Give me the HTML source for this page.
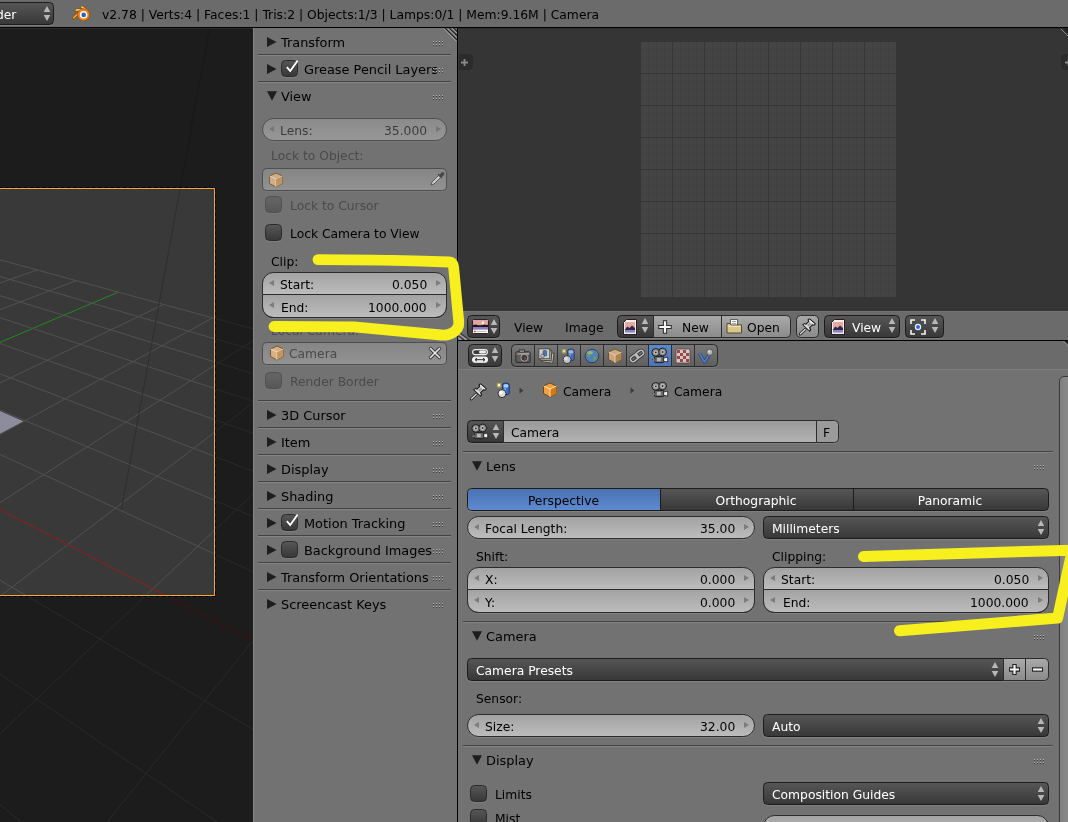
<!DOCTYPE html>
<html lang="en"><head><meta charset="utf-8"><title>Blender - Camera clipping</title>
<style>
html,body{margin:0;padding:0}
body{width:1068px;height:822px;overflow:hidden;position:relative;background:#727272;
 font-family:"DejaVu Sans","Liberation Sans",sans-serif;font-size:12.2px;color:#000;line-height:16px}
div,span,svg{position:absolute;box-sizing:border-box;white-space:nowrap}
svg{overflow:visible}
.t,.ph{will-change:transform}
/* areas */
#topbar{left:0;top:0;width:1068px;height:27px;background:#6b6b6b}
#topline{left:0;top:27px;width:1068px;height:1px;background:#000}
#topline2{left:0;top:28px;width:253px;height:1px;background:#2b2b2b}
#topline3{left:253px;top:28px;width:204px;height:1px;background:#727272;border-left:1px solid #878787}
#topline4{left:458px;top:28px;width:610px;height:1px;background:#2d2d2d}
#view3d{left:0;top:29px;width:253px;height:793px;background:#393939;overflow:hidden}
#npanel{left:253px;top:29px;width:204px;height:793px;background:#727272;border-left:1px solid #878787}
#vsplit{left:457px;top:28px;width:1px;height:794px;background:#000}
#vsplit2{left:458px;top:28px;width:1px;height:283px;background:#3c3c3c}
#imged{left:459px;top:29px;width:609px;height:282px;background:#353535;overflow:hidden}
#imghdr{left:458px;top:311px;width:610px;height:29px;background:#6b6b6b;border-top:1px solid #717171}
#hsplit{left:458px;top:340px;width:610px;height:1px;background:#000}
#prophdr{left:458px;top:341px;width:610px;height:28px;background:#6b6b6b}
#props{left:458px;top:369px;width:610px;height:452px;background:#727272;border-top:1px solid #7d7d7d}
/* text */
.t{font-size:12.3px;line-height:16px;color:#000;transform:translate(-1px,1px)}
.tw{color:#fff}
.td{color:#4a4a4a}
.ph{font-size:12.9px;line-height:16px;color:#000;transform:translate(0,1.5px)}
/* separators */
.sep{height:1px;background:#424242;box-shadow:0 1px 0 rgba(255,255,255,.13)}
/* widgets */
.w{height:23px;border:1px solid #2c2c2c;box-shadow:0 1px 0 rgba(255,255,255,.10)}
.num{background:linear-gradient(#a3a3a3,#bcbcbc);border-radius:11.5px}
.numT{border-radius:11.5px 11.5px 0 0}
.numB{border-radius:0 0 11.5px 11.5px;border-top:none;height:23px}
.menu{background:linear-gradient(#565656,#383838);border-color:#1c1c1c;border-radius:4.5px;color:#fff}
.tool{background:linear-gradient(#a9a9a9,#8b8b8b);border-radius:4.5px}
.txt{background:linear-gradient(#999,#b3b3b3);border-radius:4.5px}
.dis{opacity:.5}
.cb{width:17px;height:17px;border:1px solid #2a2a2a;border-radius:4.5px;background:linear-gradient(#565656,#383838);box-shadow:0 1px 0 rgba(255,255,255,.10)}
.cbd{opacity:.45}
.al,.ar{width:0;height:0;border-top:3.8px solid transparent;border-bottom:3.8px solid transparent;top:6.7px}
.al{border-right:5.5px solid #7c7c7c;left:5.5px}
.ar{border-left:5.5px solid #7c7c7c;right:5.5px}
.lab{left:18px;top:3px}
.val{right:18px;top:3px}
.numB .lab,.numB .val{top:3.5px}
.grip{width:13px;height:5px}

</style></head>
<body>
<!-- ================= TOP INFO BAR ================= -->
<div id="topbar">
  <div class="w menu" style="left:-12px;top:2px;width:66px;height:23px"></div>
  <span class="t tw" style="left:-3.4px;top:6px">der</span>
  <svg style="left:43px;top:6px" width="8" height="15" viewBox="0 0 8 15"><path d="M4 0 L7.3 6 H.7Z M4 15 L7.3 9 H.7Z" fill="#b8b8b8"/></svg>
  <svg id="blogo" style="left:72px;top:5px" width="19" height="17" viewBox="0 0 19 17">
    <g fill="none" stroke-linecap="round"><path d="M15 5.4 L9.8 2.1 M10.6 5 L4.2 5.2 M8 6.6 L1.8 12.6" stroke="#7a4308" stroke-width="3"/><path d="M15 5.4 L9.8 2.1 M10.6 5 L4.2 5.2 M8 6.6 L1.8 12.6" stroke="#f59a32" stroke-width="2"/><path d="M9.8 1.9 L13 3.9 M4.4 4.8 L9.6 4.6" stroke="#ffd6a6" stroke-width=".8"/></g>
    <circle cx="11.6" cy="9.8" r="6.1" fill="#ee820f" stroke="#8a4a08" stroke-width=".6"/>
    <circle cx="11.6" cy="9.8" r="3.8" fill="#fff"/>
    <circle cx="11.7" cy="9.9" r="2.3" fill="#2d62b8"/>
  </svg>
  <span class="t" id="status" style="left:102.7px;top:5.8px;font-size:12.33px">v2.78 | Verts:4 | Faces:1 | Tris:2 | Objects:1/3 | Lamps:0/1 | Mem:9.16M | Camera</span>
</div>
<div id="topline"></div><div id="topline2"></div><div id="topline3"></div><div id="topline4"></div>

<!-- ================= 3D VIEWPORT ================= -->
<div id="view3d">
  <svg style="left:0;top:-29px" width="253" height="822" viewBox="0 0 253 822" shape-rendering="auto" stroke-width="1">
    <g>
<line x1="-1002.9" y1="405.1" x2="-148.5" y2="219.3" stroke="#515151"/>
<line x1="-1002.2" y1="430.9" x2="-122.2" y2="226.5" stroke="#515151"/>
<line x1="-1001.4" y1="460.0" x2="-94.3" y2="234.1" stroke="#515151"/>
<line x1="-1000.5" y1="493.1" x2="-64.6" y2="242.2" stroke="#515151"/>
<line x1="-999.4" y1="531.1" x2="-32.9" y2="250.8" stroke="#515151"/>
<line x1="-998.2" y1="575.3" x2="1.0" y2="260.1" stroke="#515151"/>
<line x1="-996.7" y1="627.3" x2="37.3" y2="270.0" stroke="#515151"/>
<line x1="-995.0" y1="689.2" x2="76.3" y2="280.6" stroke="#515151"/>
<line x1="-992.9" y1="764.3" x2="118.2" y2="292.1" stroke="#1f8a1f"/>
<line x1="-990.3" y1="857.3" x2="163.6" y2="304.5" stroke="#515151"/>
<line x1="-987.0" y1="975.4" x2="212.7" y2="317.9" stroke="#515151"/>
<line x1="-982.7" y1="1130.4" x2="266.1" y2="332.5" stroke="#515151"/>
<line x1="-976.8" y1="1342.8" x2="324.4" y2="348.4" stroke="#515151"/>
<line x1="-968.2" y1="1651.5" x2="388.2" y2="365.8" stroke="#515151"/>
<line x1="-954.6" y1="2141.7" x2="458.5" y2="385.0" stroke="#515151"/>
<line x1="-929.6" y1="3039.7" x2="536.1" y2="406.2" stroke="#515151"/>
<line x1="-869.0" y1="5216.5" x2="622.3" y2="429.7" stroke="#515151"/>
<line x1="-1002.9" y1="405.1" x2="-869.0" y2="5216.5" stroke="#515151"/>
<line x1="-904.5" y1="383.7" x2="-182.2" y2="3012.1" stroke="#515151"/>
<line x1="-816.6" y1="364.6" x2="95.2" y2="2121.6" stroke="#515151"/>
<line x1="-737.5" y1="347.4" x2="245.2" y2="1640.0" stroke="#515151"/>
<line x1="-666.1" y1="331.9" x2="339.2" y2="1338.3" stroke="#515151"/>
<line x1="-601.2" y1="317.8" x2="403.7" y2="1131.5" stroke="#515151"/>
<line x1="-542.0" y1="304.9" x2="450.6" y2="981.0" stroke="#515151"/>
<line x1="-487.7" y1="293.1" x2="486.2" y2="866.5" stroke="#515151"/>
<line x1="-437.9" y1="282.2" x2="514.3" y2="776.4" stroke="#921c1c"/>
<line x1="-391.9" y1="272.2" x2="536.9" y2="703.8" stroke="#515151"/>
<line x1="-349.3" y1="263.0" x2="555.6" y2="643.9" stroke="#515151"/>
<line x1="-309.8" y1="254.4" x2="571.2" y2="593.8" stroke="#515151"/>
<line x1="-273.1" y1="246.4" x2="584.5" y2="551.1" stroke="#515151"/>
<line x1="-238.8" y1="238.9" x2="595.9" y2="514.4" stroke="#515151"/>
<line x1="-206.7" y1="232.0" x2="605.9" y2="482.5" stroke="#515151"/>
<line x1="-176.7" y1="225.4" x2="614.6" y2="454.5" stroke="#515151"/>
<line x1="-148.5" y1="219.3" x2="622.3" y2="429.7" stroke="#515151"/>
    </g>
    <!-- lamp line -->
    <line x1="209.5" y1="28" x2="121.3" y2="510" stroke="#2f2f2f"/>
    <!-- plane -->
    <path d="M0 411 L23.5 421.3 L0 433.8 Z" fill="#8c8c9d"/>
    <!-- passepartout -->
    <path d="M0 29 H253 V822 H0 V596 H215 V188 H0 Z" fill="#000" opacity=".5"/>
    <!-- camera border -->
    <path d="M0 187.5 H215.5 V596.5 H0" fill="none" stroke="#000" stroke-dasharray="3.2 3" stroke-dashoffset="1"/>
    <path d="M0 188.5 H214.5 V595.5 H0" fill="none" stroke="#f3a640"/>
  </svg>
</div>

<!-- ================= N PANEL ================= -->
<div id="npanel">
  <!-- corner grip -->
  <svg style="left:190px;top:-1px" width="13" height="14" viewBox="0 0 13 14"><path d="M1 0 L13 12 M5.3 0 L13 7.7 M9.6 0 L13 3.4" stroke="#161616" stroke-width="1.05"/><path d="M-.2 0.6 L12.8 13.6 M4.1 .6 L12.8 9.3 M8.4 .6 L12.8 5" stroke="#b4b4b4" stroke-width=".8"/></svg>

  <!-- headers -->
  <svg class="tri" style="left:13px;top:8px" width="10" height="10"><path d="M0 0 L9.6 5 L0 10Z" fill="#1e1e1e"/></svg>
  <span class="ph" style="left:27px;top:4px">Transform</span>
  <div class="sep" style="left:4px;top:25px;width:193px"></div>

  <svg class="tri" style="left:13px;top:35px" width="10" height="10"><path d="M0 0 L9.6 5 L0 10Z" fill="#1e1e1e"/></svg>
  <div class="cb" style="left:27px;top:31px"></div>
  <svg style="left:28.5px;top:30px" width="17" height="16" viewBox="0 0 17 16"><path d="M3.8 8.2 L7.2 12 L14.6 1.6" fill="none" stroke="#1a1a1a" stroke-width="3" opacity=".35"/><path d="M3.8 8.2 L7.2 12 L14.6 1.6" fill="none" stroke="#fff" stroke-width="1.9"/></svg>
  <span class="ph" style="left:50px;top:31px">Grease Pencil Layers</span>
  <div class="sep" style="left:4px;top:52px;width:193px"></div>

  <svg class="tri" style="left:13px;top:62px" width="10" height="10"><path d="M0 .3 L10 .3 L5 9.8Z" fill="#1e1e1e"/></svg>
  <span class="ph" style="left:27px;top:58px">View</span>

  <!-- Lens (disabled) -->
  <div class="w num dis" style="left:8px;top:89px;width:185px"><div class="al"></div><div class="ar"></div><span class="t lab">Lens:</span><span class="t val">35.000</span></div>
  <span class="t td" style="left:18px;top:118px">Lock to Object:</span>
  <div class="w txt dis" style="left:8px;top:139px;width:185px"></div>
  <svg class="icube" style="left:14px;top:142.5px" width="16" height="16" viewBox="0 0 16 16" opacity=".75"><path d="M8 1 L14.5 4 V11.5 L8 15 L1.5 11.5 V4Z" fill="#e9b77e" stroke="#5a3a12" stroke-width=".8"/><path d="M1.5 4 L8 7 L14.5 4 M8 7 V15" fill="none" stroke="#fff1dc" stroke-width=".9"/><path d="M8 7 L14.5 4 V11.5 L8 15Z" fill="#c98f4e" opacity=".8"/></svg>
  <svg style="left:175px;top:142px" width="16" height="16" viewBox="0 0 16 16" opacity=".75"><path d="M2 14 L3 11 L9.5 4.5 L11.5 6.5 L5 13 Z" fill="#ddd" stroke="#333" stroke-width=".8"/><path d="M9 3 L13 7 M10.5 5 L13 2 C14 1 15.5 2.5 14.5 3.5 L12 6" fill="#333" stroke="#333" stroke-width="1.2"/></svg>

  <div class="cb cbd" style="left:11px;top:167px"></div>
  <span class="t td" style="left:37px;top:168px">Lock to Cursor</span>
  <div class="cb" style="left:11px;top:195px"></div>
  <span class="t" style="left:37px;top:196px">Lock Camera to View</span>

  <span class="t" style="left:18px;top:224px">Clip:</span>
  <div class="w num numT" style="left:8px;top:243px;width:185px"><div class="al"></div><div class="ar"></div><span class="t lab">Start:</span><span class="t val">0.050</span></div>
  <div class="w num numB" style="left:8px;top:266px;width:185px"><div class="al"></div><div class="ar"></div><span class="t lab" style="left:19px;top:3.5px">End:</span><span class="t val">1000.000</span></div>

  <span class="t td" style="left:18px;top:293px">Local Camera:</span>
  <div class="w txt dis" style="left:8px;top:313px;width:185px"></div>
  <svg class="icube" style="left:14.5px;top:316px" width="16" height="16" viewBox="0 0 16 16" opacity=".85"><path d="M8 1 L14.5 4 V11.5 L8 15 L1.5 11.5 V4Z" fill="#e9b77e" stroke="#5a3a12" stroke-width=".8"/><path d="M1.5 4 L8 7 L14.5 4 M8 7 V15" fill="none" stroke="#fff1dc" stroke-width=".9"/><path d="M8 7 L14.5 4 V11.5 L8 15Z" fill="#c98f4e" opacity=".8"/></svg>
  <span class="t td" style="left:36px;top:316px">Camera</span>
  <svg style="left:174.5px;top:318px" width="12" height="12" viewBox="0 0 12 12"><path d="M1.5 1.5 L10.5 10.5 M10.5 1.5 L1.5 10.5" stroke="#333" stroke-width="3.2" stroke-linecap="round"/><path d="M1.5 1.5 L10.5 10.5 M10.5 1.5 L1.5 10.5" stroke="#e6e6e6" stroke-width="1.7" stroke-linecap="round"/></svg>
  <div class="cb cbd" style="left:11px;top:343px"></div>
  <span class="t td" style="left:37px;top:344px">Render Border</span>
  <div class="sep" style="left:4px;top:371px;width:193px"></div>
  <svg class="tri" style="left:13px;top:380.5px" width="10" height="10"><path d="M0 0 L9.6 5 L0 10Z" fill="#1e1e1e"/></svg>
  <span class="ph" style="left:27px;top:376.5px">3D Cursor</span>
  <div class="sep" style="left:4px;top:398px;width:193px"></div>
  <svg class="tri" style="left:13px;top:407.5px" width="10" height="10"><path d="M0 0 L9.6 5 L0 10Z" fill="#1e1e1e"/></svg>
  <span class="ph" style="left:27px;top:403.5px">Item</span>
  <div class="sep" style="left:4px;top:425px;width:193px"></div>
  <svg class="tri" style="left:13px;top:434.5px" width="10" height="10"><path d="M0 0 L9.6 5 L0 10Z" fill="#1e1e1e"/></svg>
  <span class="ph" style="left:27px;top:430.5px">Display</span>
  <div class="sep" style="left:4px;top:452px;width:193px"></div>
  <svg class="tri" style="left:13px;top:461.5px" width="10" height="10"><path d="M0 0 L9.6 5 L0 10Z" fill="#1e1e1e"/></svg>
  <span class="ph" style="left:27px;top:457.5px">Shading</span>
  <div class="sep" style="left:4px;top:479px;width:193px"></div>
  <svg class="tri" style="left:13px;top:488.5px" width="10" height="10"><path d="M0 0 L9.6 5 L0 10Z" fill="#1e1e1e"/></svg>
  <div class="cb" style="left:27px;top:484.5px"></div>
  <svg style="left:28.5px;top:483.5px" width="17" height="16" viewBox="0 0 17 16"><path d="M3.8 8.2 L7.2 12 L14.6 1.6" fill="none" stroke="#1a1a1a" stroke-width="3" opacity=".35"/><path d="M3.8 8.2 L7.2 12 L14.6 1.6" fill="none" stroke="#fff" stroke-width="1.9"/></svg>
  <span class="ph" style="left:50px;top:484.5px">Motion Tracking</span>
  <div class="sep" style="left:4px;top:506px;width:193px"></div>
  <svg class="tri" style="left:13px;top:515.5px" width="10" height="10"><path d="M0 0 L9.6 5 L0 10Z" fill="#1e1e1e"/></svg>
  <div class="cb" style="left:27px;top:511.5px"></div>
  <span class="ph" style="left:50px;top:511.5px">Background Images</span>
  <div class="sep" style="left:4px;top:533px;width:193px"></div>
  <svg class="tri" style="left:13px;top:542.5px" width="10" height="10"><path d="M0 0 L9.6 5 L0 10Z" fill="#1e1e1e"/></svg>
  <span class="ph" style="left:27px;top:538.5px">Transform Orientations</span>
  <div class="sep" style="left:4px;top:560px;width:193px"></div>
  <svg class="tri" style="left:13px;top:569.5px" width="10" height="10"><path d="M0 0 L9.6 5 L0 10Z" fill="#1e1e1e"/></svg>
  <span class="ph" style="left:27px;top:565.5px">Screencast Keys</span>
  <svg class="grip" style="left:179px;top:12px" width="13" height="5" viewBox="0 0 13 5"><path d="M0 .5h1M3 .5h1M6 .5h1M9 .5h1M0 3.5h1M3 3.5h1M6 3.5h1M9 3.5h1" stroke="#b4b4b4" stroke-width="1"/><path d="M0 1.5h1M3 1.5h1M6 1.5h1M9 1.5h1M0 4.5h1M3 4.5h1M6 4.5h1M9 4.5h1" stroke="#3c3c3c" stroke-width="1"/></svg>
  <svg class="grip" style="left:179px;top:39px" width="13" height="5" viewBox="0 0 13 5"><path d="M0 .5h1M3 .5h1M6 .5h1M9 .5h1M0 3.5h1M3 3.5h1M6 3.5h1M9 3.5h1" stroke="#b4b4b4" stroke-width="1"/><path d="M0 1.5h1M3 1.5h1M6 1.5h1M9 1.5h1M0 4.5h1M3 4.5h1M6 4.5h1M9 4.5h1" stroke="#3c3c3c" stroke-width="1"/></svg>
  <svg class="grip" style="left:179px;top:66px" width="13" height="5" viewBox="0 0 13 5"><path d="M0 .5h1M3 .5h1M6 .5h1M9 .5h1M0 3.5h1M3 3.5h1M6 3.5h1M9 3.5h1" stroke="#b4b4b4" stroke-width="1"/><path d="M0 1.5h1M3 1.5h1M6 1.5h1M9 1.5h1M0 4.5h1M3 4.5h1M6 4.5h1M9 4.5h1" stroke="#3c3c3c" stroke-width="1"/></svg>
  <svg class="grip" style="left:179px;top:384.5px" width="13" height="5" viewBox="0 0 13 5"><path d="M0 .5h1M3 .5h1M6 .5h1M9 .5h1M0 3.5h1M3 3.5h1M6 3.5h1M9 3.5h1" stroke="#b4b4b4" stroke-width="1"/><path d="M0 1.5h1M3 1.5h1M6 1.5h1M9 1.5h1M0 4.5h1M3 4.5h1M6 4.5h1M9 4.5h1" stroke="#3c3c3c" stroke-width="1"/></svg>
  <svg class="grip" style="left:179px;top:411.5px" width="13" height="5" viewBox="0 0 13 5"><path d="M0 .5h1M3 .5h1M6 .5h1M9 .5h1M0 3.5h1M3 3.5h1M6 3.5h1M9 3.5h1" stroke="#b4b4b4" stroke-width="1"/><path d="M0 1.5h1M3 1.5h1M6 1.5h1M9 1.5h1M0 4.5h1M3 4.5h1M6 4.5h1M9 4.5h1" stroke="#3c3c3c" stroke-width="1"/></svg>
  <svg class="grip" style="left:179px;top:438.5px" width="13" height="5" viewBox="0 0 13 5"><path d="M0 .5h1M3 .5h1M6 .5h1M9 .5h1M0 3.5h1M3 3.5h1M6 3.5h1M9 3.5h1" stroke="#b4b4b4" stroke-width="1"/><path d="M0 1.5h1M3 1.5h1M6 1.5h1M9 1.5h1M0 4.5h1M3 4.5h1M6 4.5h1M9 4.5h1" stroke="#3c3c3c" stroke-width="1"/></svg>
  <svg class="grip" style="left:179px;top:465.5px" width="13" height="5" viewBox="0 0 13 5"><path d="M0 .5h1M3 .5h1M6 .5h1M9 .5h1M0 3.5h1M3 3.5h1M6 3.5h1M9 3.5h1" stroke="#b4b4b4" stroke-width="1"/><path d="M0 1.5h1M3 1.5h1M6 1.5h1M9 1.5h1M0 4.5h1M3 4.5h1M6 4.5h1M9 4.5h1" stroke="#3c3c3c" stroke-width="1"/></svg>
  <svg class="grip" style="left:179px;top:492.5px" width="13" height="5" viewBox="0 0 13 5"><path d="M0 .5h1M3 .5h1M6 .5h1M9 .5h1M0 3.5h1M3 3.5h1M6 3.5h1M9 3.5h1" stroke="#b4b4b4" stroke-width="1"/><path d="M0 1.5h1M3 1.5h1M6 1.5h1M9 1.5h1M0 4.5h1M3 4.5h1M6 4.5h1M9 4.5h1" stroke="#3c3c3c" stroke-width="1"/></svg>
  <svg class="grip" style="left:179px;top:519.5px" width="13" height="5" viewBox="0 0 13 5"><path d="M0 .5h1M3 .5h1M6 .5h1M9 .5h1M0 3.5h1M3 3.5h1M6 3.5h1M9 3.5h1" stroke="#b4b4b4" stroke-width="1"/><path d="M0 1.5h1M3 1.5h1M6 1.5h1M9 1.5h1M0 4.5h1M3 4.5h1M6 4.5h1M9 4.5h1" stroke="#3c3c3c" stroke-width="1"/></svg>
  <svg class="grip" style="left:179px;top:546.5px" width="13" height="5" viewBox="0 0 13 5"><path d="M0 .5h1M3 .5h1M6 .5h1M9 .5h1M0 3.5h1M3 3.5h1M6 3.5h1M9 3.5h1" stroke="#b4b4b4" stroke-width="1"/><path d="M0 1.5h1M3 1.5h1M6 1.5h1M9 1.5h1M0 4.5h1M3 4.5h1M6 4.5h1M9 4.5h1" stroke="#3c3c3c" stroke-width="1"/></svg>
  <svg class="grip" style="left:179px;top:573.5px" width="13" height="5" viewBox="0 0 13 5"><path d="M0 .5h1M3 .5h1M6 .5h1M9 .5h1M0 3.5h1M3 3.5h1M6 3.5h1M9 3.5h1" stroke="#b4b4b4" stroke-width="1"/><path d="M0 1.5h1M3 1.5h1M6 1.5h1M9 1.5h1M0 4.5h1M3 4.5h1M6 4.5h1M9 4.5h1" stroke="#3c3c3c" stroke-width="1"/></svg>
</div>
<div id="vsplit"></div><div id="vsplit2"></div>

<!-- ================= IMAGE EDITOR ================= -->
<div id="imged">
  <!-- uv grid: abs x 641..897, y 42..298 -->
  <svg style="left:182px;top:13px" width="257" height="257" viewBox="0 0 257 257" shape-rendering="crispEdges">
    <rect x="0" y="0" width="255" height="255" fill="#444444"/>
    <path d="M7.5 0V255M15.5 0V255M23.5 0V255M39.5 0V255M47.5 0V255M55.5 0V255M71.5 0V255M79.5 0V255M87.5 0V255M103.5 0V255M111.5 0V255M119.5 0V255M135.5 0V255M143.5 0V255M151.5 0V255M167.5 0V255M175.5 0V255M183.5 0V255M199.5 0V255M207.5 0V255M215.5 0V255M231.5 0V255M239.5 0V255M247.5 0V255M0 7.5H255M0 15.5H255M0 23.5H255M0 39.5H255M0 47.5H255M0 55.5H255M0 71.5H255M0 79.5H255M0 87.5H255M0 103.5H255M0 111.5H255M0 119.5H255M0 135.5H255M0 143.5H255M0 151.5H255M0 167.5H255M0 175.5H255M0 183.5H255M0 199.5H255M0 207.5H255M0 215.5H255M0 231.5H255M0 239.5H255M0 247.5H255" stroke="#404040" stroke-width="1" fill="none"/>
    <path d="M31.5 0V255M63.5 0V255M95.5 0V255M127.5 0V255M159.5 0V255M191.5 0V255M223.5 0V255M0 31.5H255M0 63.5H255M0 95.5H255M0 127.5H255M0 159.5H255M0 191.5H255M0 223.5H255" stroke="#363636" stroke-width="1" fill="none"/>
  </svg>
  <!-- region open tabs -->
  <div style="left:-4px;top:25px;width:17.5px;height:16px;border-radius:4.5px;background:#2b2b2b"></div>
  <svg style="left:2px;top:29.5px" width="7" height="7" viewBox="0 0 7 7"><path d="M3.5 0V7M0 3.5H7" stroke="#8a8a8a" stroke-width="1.8"/></svg>
  <div style="left:602px;top:25px;width:14px;height:16px;border-radius:4.5px;background:#2b2b2b"></div>
  <svg style="left:606px;top:29.5px" width="7" height="7" viewBox="0 0 7 7"><path d="M3.5 0V7M0 3.5H7" stroke="#8a8a8a" stroke-width="1.8"/></svg>
  <!-- corner grip (top right) -->
  <svg style="left:601px;top:0" width="8" height="8" viewBox="0 0 8 8"><path d="M1 0 L8 7" stroke="#888" stroke-width="1"/><path d="M3 0 L8 5 L8 0Z" fill="#222"/></svg>
</div>

<!-- ================= IMAGE EDITOR HEADER ================= -->
<div id="imghdr">
  <svg style="left:0px;top:18px" width="13" height="10" viewBox="0 0 13 10"><path d="M0 1.5 L11.5 10 M0 5.5 L6 10" stroke="#3a3a3a" stroke-width="1.3"/><path d="M0 3.5 L8.8 10 M0 7.5 L3.4 10" stroke="#a4a4a4" stroke-width="1.3"/></svg>
  <!-- editor type -->
  <div class="w menu" style="left:9px;top:3px;width:33px"></div>
  <svg style="left:14px;top:7px" width="17" height="15" viewBox="0 0 17 15"><rect x=".5" y=".5" width="16" height="14" rx="1" fill="#fbfbfb" stroke="#2e2222"/><rect x="1" y="1" width="15" height="5.6" fill="#e3a3a0"/><circle cx="11" cy="3.7" r="1.2" fill="#fff"/><path d="M1 6.4 L2 5.6 L3.4 6 L4 5 L4.6 6 L8 6.2 L11 6 L12.4 5.4 L14 6 L16 5.8 V8.2 H1Z" fill="#1c1418"/><rect x="1" y="8" width="15" height="2.6" fill="#8c7fb9"/><circle cx="2.9" cy="12.3" r=".9" fill="#e01818"/><rect x="4.6" y="11.9" width="10" height=".9" fill="#b4b4b4"/></svg>
  <svg style="left:32px;top:7px" width="8" height="15" viewBox="0 0 8 15"><path d="M4 0 L7.3 6 H.7Z M4 15 L7.3 9 H.7Z" fill="#b8b8b8"/></svg>
  <span class="t" style="left:57px;top:7px">View</span>
  <span class="t" style="left:108px;top:7px">Image</span>
  <!-- image datablock -->
  <div class="w menu" style="left:159px;top:3px;width:37px;border-radius:4.5px 0 0 4.5px"></div>
  <svg class="iimg" style="left:165px;top:7px" width="14" height="16" viewBox="0 0 14 16"><path d="M.5 3.5 L3.5 .5 H13.5 V15.5 H.5Z" fill="#f4eeee" stroke="#2a1c1c"/><rect x="2" y="3" width="10" height="6" fill="#e9a6a6"/><path d="M2 10 L4.5 7.5 L6.5 9 L9 6.5 L12 9 V11 H2Z" fill="#2f2a3f"/><rect x="2" y="11" width="10" height="2.6" fill="#8a86c8"/></svg>
  <svg style="left:183px;top:6px" width="8" height="15" viewBox="0 0 8 15"><path d="M4 0 L7.3 6 H.7Z M4 15 L7.3 9 H.7Z" fill="#b8b8b8"/></svg>
  <div class="w tool" style="left:195px;top:3px;width:69px;border-radius:0"></div>
  <svg style="left:200px;top:7.5px" width="14" height="14" viewBox="0 0 14 14"><path d="M7 .3V13.7M.3 7H13.7" stroke="#2a2a2a" stroke-width="4.2"/><path d="M7 1.3V12.7M1.3 7H12.7" stroke="#f6f6f6" stroke-width="2.2"/></svg>
  <span class="t" style="left:225px;top:7px">New</span>
  <div class="w tool" style="left:263px;top:3px;width:70px;border-radius:0 4.5px 4.5px 0"></div>
  <svg style="left:268px;top:6px" width="17" height="17" viewBox="0 0 17 17"><path d="M4.5 1.5 H11.5 V9 H4.5Z" fill="#fafafa" stroke="#444" stroke-width=".8"/><path d="M6 3.5H10M6 5.5H10" stroke="#888" stroke-width=".8"/><path d="M1 5.5 H4 L5 7 H15.5 V15 H1Z" fill="#d9c88a" stroke="#4a4220" stroke-width=".9"/><path d="M1.8 8.3H14.8" stroke="#f3e9bd" stroke-width="1"/></svg>
  <span class="t" style="left:290px;top:7px">Open</span>
  <!-- pin -->
  <div class="w tool" style="left:338px;top:3px;width:23px"></div>
  <svg class="ipin" style="left:341px;top:6px" width="17" height="17" viewBox="0 0 17 17"><g stroke-linejoin="round" stroke-linecap="round"><path d="M6.2 11.3 L1.2 16" stroke="#1a1a1a" stroke-width="2.8" fill="none"/><path d="M6.2 11.3 L1.4 15.8" stroke="#e0e0e0" stroke-width="1.3" fill="none"/><path d="M3.8 6.6 L10.8 13.2 L11.6 11.2 L10.6 9.6 L13.4 6.8 L15.6 7 L16.2 5.6 L10.6 .9 L9.2 1.6 L9.6 3.6 L7 6.2 L5.4 5.6 Z" fill="#d4d4d4" stroke="#1a1a1a" stroke-width="1.1"/><path d="M10.4 2.2 L14.8 5.9 M5.2 6.8 L9.8 11.2" stroke="#fff" stroke-width=".9" fill="none"/><path d="M8 7.2 L10.6 4.6 L12.2 6.2 L9.8 8.6Z" fill="#9a9a9a"/></g></svg>
  <!-- View mode -->
  <div class="w menu" style="left:366px;top:3px;width:76px"></div>
  <svg class="iimg" style="left:373px;top:7px" width="14" height="16" viewBox="0 0 14 16"><path d="M.5 3.5 L3.5 .5 H13.5 V15.5 H.5Z" fill="#f4eeee" stroke="#2a1c1c"/><rect x="2" y="3" width="10" height="6" fill="#e9a6a6"/><path d="M2 10 L4.5 7.5 L6.5 9 L9 6.5 L12 9 V11 H2Z" fill="#2f2a3f"/><rect x="2" y="11" width="10" height="2.6" fill="#8a86c8"/></svg>
  <span class="t tw" style="left:394.5px;top:7px">View</span>
  <svg style="left:430px;top:6px" width="8" height="15" viewBox="0 0 8 15"><path d="M4 0 L7.3 6 H.7Z M4 15 L7.3 9 H.7Z" fill="#b8b8b8"/></svg>
  <!-- pivot -->
  <div class="w menu" style="left:447px;top:3px;width:39px"></div>
  <svg style="left:452px;top:7px" width="16" height="16" viewBox="0 0 16 16"><path d="M1 5V1H5M11 1H15V5M15 11V15H11M5 15H1V11" fill="none" stroke="#f4f4f4" stroke-width="1.6"/><circle cx="8" cy="8" r="3.2" fill="#e8f0ff"/><circle cx="8" cy="8" r="2" fill="#2a6ae0"/></svg>
  <svg style="left:473px;top:6px" width="8" height="15" viewBox="0 0 8 15"><path d="M4 0 L7.3 6 H.7Z M4 15 L7.3 9 H.7Z" fill="#b8b8b8"/></svg>
</div>
<div id="hsplit"></div>

<!-- ================= PROPERTIES HEADER ================= -->
<div id="prophdr">
  <svg style="left:604px;top:0" width="6" height="6" viewBox="0 0 6 6"><path d="M1 0 L6 5" stroke="#8a8a8a" stroke-width="1"/><path d="M2.5 0 L6 3.5 L6 0Z" fill="#222"/></svg>
  <div class="w menu" style="left:10px;top:3px;width:34px"></div>
  <svg style="left:14px;top:8px" width="16" height="14" viewBox="0 0 16 14"><rect x=".6" y=".6" width="14.8" height="5" rx="2.5" fill="#3a3a3a" stroke="#f0f0f0" stroke-width="1.2"/><rect x="7" y="1.6" width="7" height="3" rx="1.5" fill="#f0f0f0"/><rect x=".6" y="8.2" width="14.8" height="5" rx="2.5" fill="#f0f0f0" stroke="#f0f0f0" stroke-width="1.2"/><path d="M3 10.7H13M5 9.2L3 10.7L5 12.2M11 9.2L13 10.7L11 12.2" stroke="#2a2a2a" stroke-width="1" fill="none"/></svg>
  <svg style="left:33px;top:6px" width="8" height="15" viewBox="0 0 8 15"><path d="M4 0 L7.3 6 H.7Z M4 15 L7.3 9 H.7Z" fill="#b8b8b8"/></svg>
  <!-- tabs: abs x 511..718 -->
  <div class="w tool" id="tabs" style="left:53px;top:3px;width:207px;background:linear-gradient(#787878,#5f5f5f);border-color:#2a2a2a"></div>
  <div style="left:190px;top:4px;width:23px;height:21px;background:linear-gradient(#5b88cf,#4c75b8)"></div>
  <div style="left:75.9px;top:4px;width:1px;height:21px;background:#2e2e2e"></div>
  <div style="left:98.8px;top:4px;width:1px;height:21px;background:#2e2e2e"></div>
  <div style="left:121.7px;top:4px;width:1px;height:21px;background:#2e2e2e"></div>
  <div style="left:144.6px;top:4px;width:1px;height:21px;background:#2e2e2e"></div>
  <div style="left:167.5px;top:4px;width:1px;height:21px;background:#2e2e2e"></div>
  <div style="left:190.4px;top:4px;width:1px;height:21px;background:#2e2e2e"></div>
  <div style="left:213.3px;top:4px;width:1px;height:21px;background:#2e2e2e"></div>
  <div style="left:236.2px;top:4px;width:1px;height:21px;background:#2e2e2e"></div>
  <!-- render (photo camera) -->
  <svg style="left:57px;top:7px" width="16" height="16" viewBox="0 0 16 16" opacity=".78"><rect x=".8" y="3.8" width="14.4" height="10.6" rx="1.3" fill="#5a5a5a" stroke="#1c1c1c"/><rect x="4.2" y="1.8" width="5.4" height="2.6" fill="#8a8a8a" stroke="#1c1c1c" stroke-width=".8"/><rect x="1.6" y="4.8" width="12.8" height="1.8" fill="#b0b0b0"/><circle cx="2.8" cy="5.7" r=".8" fill="#d03030"/><circle cx="9.4" cy="9.8" r="3.5" fill="#2a2a2a" stroke="#c8c8c8" stroke-width=".9"/><circle cx="10" cy="10.4" r="1.4" fill="#8a3a3a"/></svg>
  <!-- render layers -->
  <svg style="left:79.9px;top:7px" width="16" height="16" viewBox="0 0 16 16" opacity=".78"><rect x="4.5" y="4.5" width="11" height="10" fill="#d8d2c0" stroke="#3a3a3a" transform="rotate(8 10 9)"/><rect x="2.5" y="2.5" width="11" height="10" fill="#e6e0d0" stroke="#3a3a3a" transform="rotate(4 8 7)"/><rect x=".8" y=".8" width="11" height="10" fill="#efeadc" stroke="#3a3a3a"/><rect x="5" y="2.5" width="3.6" height="5.5" rx="1" fill="#3a78d8" stroke="#1a3a70" stroke-width=".6"/><circle cx="4.5" cy="8" r="1.8" fill="#d0d0d0" stroke="#444" stroke-width=".6"/></svg>
  <!-- scene -->
  <svg style="left:102.8px;top:7px" width="16" height="17" viewBox="0 0 16 17" opacity=".78"><rect x="6.6" y="1.2" width="6.6" height="11.4" rx="2" fill="#3c6fcc" stroke="#16295e" stroke-width=".9"/><rect x="7.6" y="2.2" width="4.6" height="3.4" rx="1.2" fill="#b4cdf4"/><rect x="8" y="5" width="2" height="6.4" fill="#6f9be6"/><circle cx="6" cy="11.6" r="4" fill="#dcdcdc" stroke="#1e1e1e" stroke-width=".9"/><circle cx="5" cy="10.6" r="1.8" fill="#fff"/><rect x=".8" y="1" width="4.4" height="4.4" rx="1" fill="#c9c43a" opacity=".75"/><rect x="2" y="2.2" width="2" height="2" fill="#fffff0"/></svg>
  <!-- world -->
  <svg style="left:125.6px;top:7px" width="16" height="16" viewBox="0 0 16 16" opacity=".78"><circle cx="8" cy="8" r="6.8" fill="#4a86d8" stroke="#1c2c4a" stroke-width=".9"/><path d="M4 3.5 C6 2.5 8 3 8.5 5 C8.5 7 6 7 6 9 C5 10 3.5 9 2.5 7 C2.3 5.5 3 4.2 4 3.5Z M9.5 8.5 C11 8 13 9 12.5 11 C12 12.5 10.5 13.5 9.5 12.5 C9 11 8.5 9.5 9.5 8.5Z M11 3 C12.5 3.5 13.5 5 13.8 6 C12.5 6.5 11 5 11 3Z" fill="#6aa85a"/><ellipse cx="6" cy="4.5" rx="3" ry="1.6" fill="#fff" opacity=".35"/></svg>
  <!-- object cube -->
  <svg style="left:148.5px;top:7px" width="16" height="16" viewBox="0 0 16 16" opacity=".78"><path d="M8 1 L14.5 4 V11.5 L8 15 L1.5 11.5 V4Z" fill="#e9b77e" stroke="#5a3a12" stroke-width=".8"/><path d="M8 7 L14.5 4 V11.5 L8 15Z" fill="#c48a48"/><path d="M1.5 4 L8 7 L14.5 4 M8 7 V15" fill="none" stroke="#fff1dc" stroke-width=".9"/></svg>
  <!-- constraints (chain) -->
  <svg style="left:171.4px;top:7px" width="16" height="16" viewBox="0 0 16 16" opacity=".78"><g fill="none" transform="rotate(-38 8 8)"><rect x="0.4" y="5.4" width="8.4" height="5.2" rx="2.6" stroke="#222" stroke-width="3.2"/><rect x="7.2" y="5.4" width="8.4" height="5.2" rx="2.6" stroke="#222" stroke-width="3.2"/><rect x="0.4" y="5.4" width="8.4" height="5.2" rx="2.6" stroke="#d8d8d8" stroke-width="1.5"/><rect x="7.2" y="5.4" width="8.4" height="5.2" rx="2.6" stroke="#d8d8d8" stroke-width="1.5"/></g></svg>
  <!-- data: movie camera (active) -->
  <svg class="icam" style="left:193.3px;top:6px" width="18" height="18" viewBox="0 0 18 18"><circle cx="4.8" cy="5.4" r="3.9" fill="#8e8e8e" stroke="#1e1e1e" stroke-width="1"/><circle cx="11.6" cy="5" r="3.9" fill="#8e8e8e" stroke="#1e1e1e" stroke-width="1"/><circle cx="4.8" cy="5.4" r="2" fill="#c2c2c2"/><circle cx="11.6" cy="5" r="2" fill="#c2c2c2"/><circle cx="4.8" cy="5.4" r=".9" fill="#2a2a2a"/><circle cx="11.6" cy="5" r=".9" fill="#2a2a2a"/><rect x="3.6" y="9.4" width="9" height="6.2" rx=".8" fill="#6a6a6a" stroke="#1e1e1e" stroke-width="1"/><rect x="6" y="10.8" width="3.8" height="3.4" fill="#b8b8b8"/><path d="M12.6 11 L16.7 10.1 V15.1 L12.6 14.2Z" fill="#f0f0f0" stroke="#1e1e1e" stroke-width=".8"/><rect x="1.2" y="12.3" width="3" height="1.4" fill="#f0f0f0" stroke="#2a2a2a" stroke-width=".5"/></svg>
  <!-- texture checker -->
  <svg style="left:217.2px;top:7px" width="16" height="16" viewBox="0 0 16 16" opacity=".78"><rect x="1" y="1" width="14" height="14" rx="1.5" fill="#ece4e4" stroke="#5a3030" stroke-width=".8"/><path d="M2 2h3v3H2zM8 2h3v3H8zM5 5h3v3H5zM11 5h3v3h-3zM2 8h3v3H2zM8 8h3v3H8zM5 11h3v3H5zM11 11h3v3h-3z" fill="#b03a3a"/></svg>
  <!-- physics -->
  <svg style="left:240.1px;top:7px" width="16" height="16" viewBox="0 0 16 16" opacity=".78"><path d="M1.5 5.5 L6.5 14 L11.5 6.5" fill="none" stroke="#1c3f80" stroke-width="3.4" stroke-linejoin="round"/><path d="M1.5 5.5 L6.5 14 L11.5 6.5" fill="none" stroke="#4a80d8" stroke-width="1.8" stroke-linejoin="round"/><circle cx="11.8" cy="4.2" r="3.1" fill="#c8c8c8" stroke="#444" stroke-width=".8"/><circle cx="11" cy="3.4" r="1" fill="#fff"/></svg>
</div>

<!-- ================= PROPERTIES CONTENT ================= -->
<div id="props">
  <!-- scrollbar: abs x 1059.., y 377.. -->
  <div style="left:601px;top:6px;width:14px;height:460px;border:1px solid #3a3a3a;border-radius:5px;background:linear-gradient(90deg,#808080,#8e8e8e)"></div>

  <!-- breadcrumb: abs y center ~391 -->
  <svg class="ipin" style="left:12px;top:12.5px" width="17" height="17" viewBox="0 0 17 17"><g stroke-linejoin="round" stroke-linecap="round"><path d="M6.2 11.3 L1.2 16" stroke="#1a1a1a" stroke-width="2.8" fill="none"/><path d="M6.2 11.3 L1.4 15.8" stroke="#e0e0e0" stroke-width="1.3" fill="none"/><path d="M3.8 6.6 L10.8 13.2 L11.6 11.2 L10.6 9.6 L13.4 6.8 L15.6 7 L16.2 5.6 L10.6 .9 L9.2 1.6 L9.6 3.6 L7 6.2 L5.4 5.6 Z" fill="#d4d4d4" stroke="#1a1a1a" stroke-width="1.1"/><path d="M10.4 2.2 L14.8 5.9 M5.2 6.8 L9.8 11.2" stroke="#fff" stroke-width=".9" fill="none"/><path d="M8 7.2 L10.6 4.6 L12.2 6.2 L9.8 8.6Z" fill="#9a9a9a"/></g></svg>
  <svg style="left:38px;top:12px" width="16" height="17" viewBox="0 0 16 17"><rect x="6.6" y="1.2" width="6.6" height="11.4" rx="2" fill="#3c6fcc" stroke="#16295e" stroke-width=".9"/><rect x="7.6" y="2.2" width="4.6" height="3.4" rx="1.2" fill="#b4cdf4"/><rect x="8" y="5" width="2" height="6.4" fill="#6f9be6"/><circle cx="6" cy="11.6" r="4" fill="#dcdcdc" stroke="#1e1e1e" stroke-width=".9"/><circle cx="5" cy="10.6" r="1.8" fill="#fff"/><rect x=".8" y="1" width="4.4" height="4.4" rx="1" fill="#c9c43a" opacity=".75"/><rect x="2" y="2.2" width="2" height="2" fill="#fffff0"/></svg>
  <svg style="left:61px;top:17px" width="5" height="7" viewBox="0 0 5 7"><path d="M.5 .5 L4.5 3.5 L.5 6.5Z" fill="#3c3c3c"/></svg>
  <svg style="left:84px;top:12px" width="16" height="16" viewBox="0 0 16 16"><path d="M8 1 L14.5 4 V11.5 L8 15 L1.5 11.5 V4Z" fill="#f0a040" stroke="#5a3206" stroke-width=".8"/><path d="M8 7 L14.5 4 V11.5 L8 15Z" fill="#d07a18"/><path d="M1.5 4 L8 7 L14.5 4 M8 7 V15" fill="none" stroke="#ffe7c4" stroke-width=".9"/></svg>
  <span class="t" style="left:106px;top:13px">Camera</span>
  <svg style="left:172px;top:17px" width="5" height="7" viewBox="0 0 5 7"><path d="M.5 .5 L4.5 3.5 L.5 6.5Z" fill="#3c3c3c"/></svg>
  <svg class="icam" style="left:193px;top:11px" width="18" height="18" viewBox="0 0 18 18"><circle cx="4.8" cy="5.4" r="3.9" fill="#8e8e8e" stroke="#1e1e1e" stroke-width="1"/><circle cx="11.6" cy="5" r="3.9" fill="#8e8e8e" stroke="#1e1e1e" stroke-width="1"/><circle cx="4.8" cy="5.4" r="2" fill="#c2c2c2"/><circle cx="11.6" cy="5" r="2" fill="#c2c2c2"/><circle cx="4.8" cy="5.4" r=".9" fill="#2a2a2a"/><circle cx="11.6" cy="5" r=".9" fill="#2a2a2a"/><rect x="3.6" y="9.4" width="9" height="6.2" rx=".8" fill="#6a6a6a" stroke="#1e1e1e" stroke-width="1"/><rect x="6" y="10.8" width="3.8" height="3.4" fill="#b8b8b8"/><path d="M12.6 11 L16.7 10.1 V15.1 L12.6 14.2Z" fill="#f0f0f0" stroke="#1e1e1e" stroke-width=".8"/><rect x="1.2" y="12.3" width="3" height="1.4" fill="#f0f0f0" stroke="#2a2a2a" stroke-width=".5"/></svg>
  <span class="t" style="left:217px;top:13px">Camera</span>

  <!-- datablock: abs y 420..443 -->
  <div class="w menu" style="left:9px;top:50px;width:37px;border-radius:4.5px 0 0 4.5px"></div>
  <svg class="icam" style="left:13px;top:53px" width="18" height="18" viewBox="0 0 18 18"><circle cx="4.8" cy="5.4" r="3.9" fill="#8e8e8e" stroke="#1e1e1e" stroke-width="1"/><circle cx="11.6" cy="5" r="3.9" fill="#8e8e8e" stroke="#1e1e1e" stroke-width="1"/><circle cx="4.8" cy="5.4" r="2" fill="#c2c2c2"/><circle cx="11.6" cy="5" r="2" fill="#c2c2c2"/><circle cx="4.8" cy="5.4" r=".9" fill="#2a2a2a"/><circle cx="11.6" cy="5" r=".9" fill="#2a2a2a"/><rect x="3.6" y="9.4" width="9" height="6.2" rx=".8" fill="#6a6a6a" stroke="#1e1e1e" stroke-width="1"/><rect x="6" y="10.8" width="3.8" height="3.4" fill="#b8b8b8"/><path d="M12.6 11 L16.7 10.1 V15.1 L12.6 14.2Z" fill="#f0f0f0" stroke="#1e1e1e" stroke-width=".8"/><rect x="1.2" y="12.3" width="3" height="1.4" fill="#f0f0f0" stroke="#2a2a2a" stroke-width=".5"/></svg>
  <svg style="left:34px;top:54px" width="8" height="15" viewBox="0 0 8 15"><path d="M4 0 L7.3 6 H.7Z M4 15 L7.3 9 H.7Z" fill="#b8b8b8"/></svg>
  <div class="w txt" style="left:45px;top:50px;width:314px;border-radius:0"></div>
  <span class="t" style="left:54px;top:54px">Camera</span>
  <div class="w tool" style="left:358px;top:50px;width:23px;border-radius:0 4.5px 4.5px 0;background:#9a9a9a"></div>
  <span class="t" style="left:366px;top:54px;font-size:12.3px">F</span>

  <!-- Lens panel -->
  <div class="sep" style="left:5px;top:81px;width:590px"></div>
  <svg class="tri" style="left:14px;top:91px" width="10" height="10"><path d="M0 .3 L10 .3 L5 9.8Z" fill="#1e1e1e"/></svg>
  <span class="ph" style="left:28px;top:87px">Lens</span>
  <svg class="grip g2" style="left:576px;top:95px" width="13" height="5" viewBox="0 0 13 5"><path d="M0 .5h1M3 .5h1M6 .5h1M9 .5h1M0 3.5h1M3 3.5h1M6 3.5h1M9 3.5h1" stroke="#b4b4b4" stroke-width="1"/><path d="M0 1.5h1M3 1.5h1M6 1.5h1M9 1.5h1M0 4.5h1M3 4.5h1M6 4.5h1M9 4.5h1" stroke="#3c3c3c" stroke-width="1"/></svg>

  <!-- radio row: abs y 488..511 ; x 467..1049 -->
  <div class="w menu" style="left:9px;top:118px;width:582px"></div>
  <div style="left:10px;top:119px;width:193px;height:21px;border-radius:3.5px 0 0 3.5px;background:linear-gradient(#4a72b4,#5e8ad0)"></div>
  <div style="left:202px;top:119px;width:1px;height:21px;background:#1c1c1c"></div>
  <div style="left:395px;top:119px;width:1px;height:21px;background:#1c1c1c"></div>
  <span class="t" style="left:10px;top:122px;width:193px;text-align:center">Perspective</span>
  <span class="t tw" style="left:203px;top:122px;width:192px;text-align:center">Orthographic</span>
  <span class="t tw" style="left:396px;top:122px;width:194px;text-align:center">Panoramic</span>

  <!-- focal length -->
  <div class="w num" style="left:9px;top:146px;width:288px"><div class="al"></div><div class="ar"></div><span class="t lab">Focal Length:</span><span class="t val">35.00</span></div>
  <div class="w menu" style="left:305px;top:146px;width:286px"><span class="t tw" style="left:9px;top:3px">Millimeters</span></div>
  <svg style="left:579px;top:150px" width="8" height="15" viewBox="0 0 8 15"><path d="M4 0 L7.3 6 H.7Z M4 15 L7.3 9 H.7Z" fill="#b8b8b8"/></svg>

  <span class="t" style="left:19px;top:178px">Shift:</span>
  <span class="t" style="left:315px;top:178px">Clipping:</span>
  <div class="w num numT" style="left:9px;top:197px;width:288px"><div class="al"></div><div class="ar"></div><span class="t lab">X:</span><span class="t val">0.000</span></div>
  <div class="w num numB" style="left:9px;top:220px;width:288px"><div class="al"></div><div class="ar"></div><span class="t lab">Y:</span><span class="t val">0.000</span></div>
  <div class="w num numT" style="left:305px;top:197px;width:286px"><div class="al"></div><div class="ar"></div><span class="t lab">Start:</span><span class="t val">0.050</span></div>
  <div class="w num numB" style="left:305px;top:220px;width:286px"><div class="al"></div><div class="ar"></div><span class="t lab" style="left:20px;top:3.5px">End:</span><span class="t val">1000.000</span></div>

  <!-- Camera panel -->
  <div class="sep" style="left:5px;top:251px;width:590px"></div>
  <svg class="tri" style="left:14px;top:261px" width="10" height="10"><path d="M0 .3 L10 .3 L5 9.8Z" fill="#1e1e1e"/></svg>
  <span class="ph" style="left:28px;top:257px">Camera</span>
  <svg class="grip g2" style="left:576px;top:265px" width="13" height="5" viewBox="0 0 13 5"><path d="M0 .5h1M3 .5h1M6 .5h1M9 .5h1M0 3.5h1M3 3.5h1M6 3.5h1M9 3.5h1" stroke="#b4b4b4" stroke-width="1"/><path d="M0 1.5h1M3 1.5h1M6 1.5h1M9 1.5h1M0 4.5h1M3 4.5h1M6 4.5h1M9 4.5h1" stroke="#3c3c3c" stroke-width="1"/></svg>

  <div class="w menu" style="left:9px;top:288px;width:537px;border-radius:4.5px 0 0 4.5px"><span class="t tw" style="left:9px;top:3px">Camera Presets</span></div>
  <svg style="left:533px;top:292px" width="8" height="15" viewBox="0 0 8 15"><path d="M4 0 L7.3 6 H.7Z M4 15 L7.3 9 H.7Z" fill="#b8b8b8"/></svg>
  <div class="w tool" style="left:545px;top:288px;width:23px;border-radius:0"></div>
  <svg style="left:550px;top:293px" width="13" height="13" viewBox="0 0 13 13"><path d="M6.5 1V12M1 6.5H12" stroke="#222" stroke-width="4.4"/><path d="M6.5 2V11M2 6.5H11" stroke="#f4f4f4" stroke-width="2.2"/></svg>
  <div class="w tool" style="left:567px;top:288px;width:24px;border-radius:0 4.5px 4.5px 0"></div>
  <svg style="left:573px;top:293px" width="13" height="13" viewBox="0 0 13 13"><path d="M1 6.5H12" stroke="#222" stroke-width="4.4"/><path d="M2 6.5H11" stroke="#f4f4f4" stroke-width="2.2"/></svg>

  <span class="t" style="left:19px;top:319.7px">Sensor:</span>
  <div class="w num" style="left:9px;top:344px;width:288px"><div class="al"></div><div class="ar"></div><span class="t lab">Size:</span><span class="t val">32.00</span></div>
  <div class="w menu" style="left:305px;top:344px;width:286px"><span class="t tw" style="left:9px;top:3px">Auto</span></div>
  <svg style="left:579px;top:348px" width="8" height="15" viewBox="0 0 8 15"><path d="M4 0 L7.3 6 H.7Z M4 15 L7.3 9 H.7Z" fill="#b8b8b8"/></svg>

  <!-- Display panel -->
  <div class="sep" style="left:5px;top:375px;width:590px"></div>
  <svg class="tri" style="left:14px;top:385px" width="10" height="10"><path d="M0 .3 L10 .3 L5 9.8Z" fill="#1e1e1e"/></svg>
  <span class="ph" style="left:28px;top:381px">Display</span>
  <svg class="grip g2" style="left:576px;top:389px" width="13" height="5" viewBox="0 0 13 5"><path d="M0 .5h1M3 .5h1M6 .5h1M9 .5h1M0 3.5h1M3 3.5h1M6 3.5h1M9 3.5h1" stroke="#b4b4b4" stroke-width="1"/><path d="M0 1.5h1M3 1.5h1M6 1.5h1M9 1.5h1M0 4.5h1M3 4.5h1M6 4.5h1M9 4.5h1" stroke="#3c3c3c" stroke-width="1"/></svg>

  <div class="cb" style="left:12px;top:415px"></div>
  <span class="t" style="left:38px;top:416px">Limits</span>
  <div class="cb" style="left:12px;top:439px"></div>
  <span class="t" style="left:38px;top:440px">Mist</span>
  <div class="w menu" style="left:305px;top:412px;width:286px"><span class="t tw" style="left:9px;top:3px">Composition Guides</span></div>
  <svg style="left:579px;top:416px" width="8" height="15" viewBox="0 0 8 15"><path d="M4 0 L7.3 6 H.7Z M4 15 L7.3 9 H.7Z" fill="#b8b8b8"/></svg>
  <div class="w num" style="left:305px;top:445px;width:286px"></div>
</div>

<!-- ================= YELLOW ANNOTATIONS ================= -->
<svg id="anno" style="left:0;top:0" width="1068" height="822" viewBox="0 0 1068 822">
  <g fill="none" stroke="#f7ef1e" stroke-linecap="round" stroke-linejoin="round">
    <path d="M318 259.6 C360 259.6 420 261 449 262 Q453 262.3 453.6 267 L458.8 322 Q459.2 329 452.5 332.8 Q448 335.6 441 335 L354 326.9 L274 326.5" stroke-width="10.8"/>
    <path d="M863.5 556.4 L1000 552.3 L1072.3 550.2 L1057.6 618 L899.5 630.8" stroke-width="11"/>
  </g>
</svg>

</body></html>
